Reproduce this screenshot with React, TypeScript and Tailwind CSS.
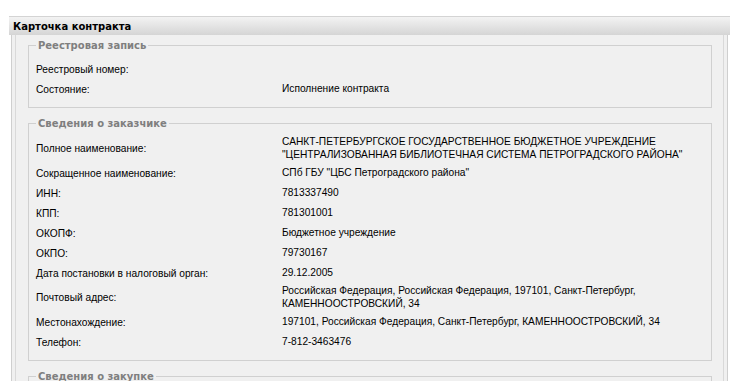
import React from "react";

type Row = { label: string; value?: string[] };

const registry: Row[] = [
  { label: "Реестровый номер:" },
  { label: "Состояние:", value: ["Исполнение контракта"] },
];

const customer: Row[] = [
  {
    label: "Полное наименование:",
    value: [
      "САНКТ-ПЕТЕРБУРГСКОЕ ГОСУДАРСТВЕННОЕ БЮДЖЕТНОЕ УЧРЕЖДЕНИЕ",
      "\"ЦЕНТРАЛИЗОВАННАЯ БИБЛИОТЕЧНАЯ СИСТЕМА ПЕТРОГРАДСКОГО РАЙОНА\"",
    ],
  },
  { label: "Сокращенное наименование:", value: ["СПб ГБУ \"ЦБС Петроградского района\""] },
  { label: "ИНН:", value: ["7813337490"] },
  { label: "КПП:", value: ["781301001"] },
  { label: "ОКОПФ:", value: ["Бюджетное учреждение"] },
  { label: "ОКПО:", value: ["79730167"] },
  { label: "Дата постановки в налоговый орган:", value: ["29.12.2005"] },
  {
    label: "Почтовый адрес:",
    value: [
      "Российская Федерация, Российская Федерация, 197101, Санкт-Петербург,",
      "КАМЕННООСТРОВСКИЙ, 34",
    ],
  },
  { label: "Местонахождение:", value: ["197101, Российская Федерация, Санкт-Петербург, КАМЕННООСТРОВСКИЙ, 34"] },
  { label: "Телефон:", value: ["7-812-3463476"] },
];

const boldFont = { fontFamily: '"DejaVu Sans", Verdana, sans-serif' };

const Section = ({ title, rows, first }: { title: string; rows: Row[]; first?: boolean }) => (
  <fieldset
    className={`border border-[#d0d0d0] pl-[7px] pr-[8px] pb-[8px] ${first ? "pt-[7px]" : "mt-[9px] pt-[4px]"}`}
  >
    <legend className="px-[2px] text-[10px] font-bold leading-[13px] text-[#7f7f7f]" style={boldFont}>
      {title}
    </legend>
    {rows.map((r) => (
      <div key={r.label} className="flex min-h-[20px] items-center py-[2px]">
        <div className="w-[246px] shrink-0">{r.label}</div>
        <div className="leading-[12.5px]">
          {r.value?.map((v) => (
            <div key={v} className="whitespace-nowrap">{v}</div>
          ))}
        </div>
      </div>
    ))}
    {rows.length === 0 && <div className="h-[40px]" />}
  </fieldset>
);

export default function App() {
  return (
    <div
      className="h-[381px] overflow-hidden bg-white pt-[16px] text-[10.2px] leading-[13px] text-black"
      style={{ fontFamily: '"Liberation Sans", Arial, sans-serif' }}
    >
      <div className="ml-[9px] w-[721px]">
        <div
          className="flex h-[19px] items-center border-t border-[#d4d4d4] bg-gradient-to-b from-[#f3f3f3] to-[#d5d5d5] pl-[4px] text-[10px] font-bold"
          style={boldFont}
        >
          Карточка контракта
        </div>
        <div className="mx-[2px] h-[400px] border-x border-[#cfcfcf] bg-[#f0f0f0] px-[3px]">
          <div className="h-full border-x border-[#d9d9d9] pl-[12px] pr-[11px] pt-[4px]">
            <Section title="Реестровая запись" rows={registry} first />
            <Section title="Сведения о заказчике" rows={customer} />
            <Section title="Сведения о закупке" rows={[]} />
          </div>
        </div>
      </div>
    </div>
  );
}
